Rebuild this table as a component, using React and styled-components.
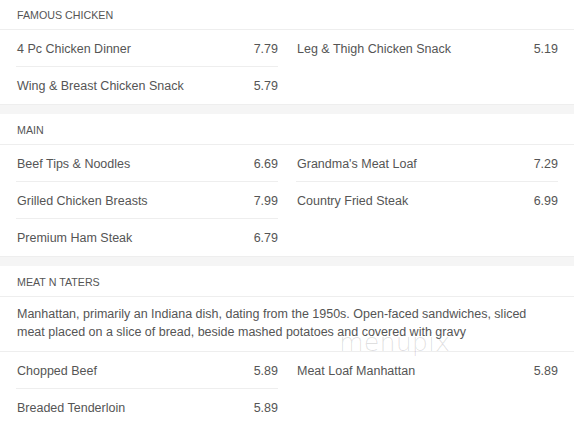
import React from "react";
import styled, {createGlobalStyle} from "styled-components";

const GlobalStyle = createGlobalStyle`
  body {
    margin: 0;
    background: #fff;
    font-family: "Liberation Sans", Arial, sans-serif;
    color: #555;
  }
`;

const menu = [
    {
        title: "FAMOUS CHICKEN",
        columns: [
            [["4 Pc Chicken Dinner", "7.79"], ["Wing & Breast Chicken Snack", "5.79"]],
            [["Leg & Thigh Chicken Snack", "5.19"]],
        ],
    },
    {
        title: "MAIN",
        columns: [
            [["Beef Tips & Noodles", "6.69"], ["Grilled Chicken Breasts", "7.99"], ["Premium Ham Steak", "6.79"]],
            [["Grandma's Meat Loaf", "7.29"], ["Country Fried Steak", "6.99"]],
        ],
    },
    {
        title: "MEAT N TATERS",
        description: "Manhattan, primarily an Indiana dish, dating from the 1950s. Open-faced sandwiches, sliced meat placed on a slice of bread, beside mashed potatoes and covered with gravy",
        columns: [
            [["Chopped Beef", "5.89"], ["Breaded Tenderloin", "5.89"]],
            [["Meat Loaf Manhattan", "5.89"]],
        ],
    },
];

const Page = styled.div`
  position: relative;
  width: 574px;
  margin-top: -1px;
`;

const Section = styled.section`
  background: #fff;
`;

const Band = styled.div`
  height: 9px;
  background: #f5f5f5;
  border-top: 1px solid #eee;
`;

const Header = styled.h3`
  margin: 0;
  height: 28px;
  padding: 2px 17px 0;
  display: flex;
  align-items: center;
  font-size: 10.7px;
  font-weight: normal;
  color: #555;
  border-bottom: 1px solid #eee;
`;

const Description = styled.p`
  margin: 0;
  padding: 8px 17px 10px;
  font-size: 12.5px;
  line-height: 18px;
  color: #555;
  border-bottom: 1px solid #eee;
`;

const Columns = styled.div`
  display: grid;
  grid-template-columns: 262px 262px;
  column-gap: 18px;
  padding: 0 17px 0 16px;
`;

const Column = styled.div`
  display: flex;
  flex-direction: column;
`;

const Row = styled.div`
  height: 35px;
  padding: 1px 0 0 1px;
  display: flex;
  align-items: center;
  justify-content: space-between;
  font-size: 12.5px;
  color: #555;
  border-bottom: 1px solid #eee;

  &:last-child {
    border-bottom-color: transparent;
  }
`;

const Watermark = styled.div`
  position: absolute;
  left: 339px;
  top: 328px;
  font-family: "DejaVu Sans", sans-serif;
  font-weight: 200;
  font-size: 25.5px;
  color: rgba(0, 0, 0, 0.12);
  pointer-events: none;
`;

export default function App() {
    return (
        <Page>
            <GlobalStyle/>
            {menu.map((section, i) => (
                <Section key={section.title}>
                    {i > 0 && <Band/>}
                    <Header>{section.title}</Header>
                    {section.description && <Description>{section.description}</Description>}
                    <Columns>
                        {section.columns.map((col, c) => (
                            <Column key={c}>
                                {col.map(([name, price]) => (
                                    <Row key={name}>
                                        <span>{name}</span>
                                        <span>{price}</span>
                                    </Row>
                                ))}
                            </Column>
                        ))}
                    </Columns>
                </Section>
            ))}
            <Watermark>menupix</Watermark>
        </Page>
    );
}
